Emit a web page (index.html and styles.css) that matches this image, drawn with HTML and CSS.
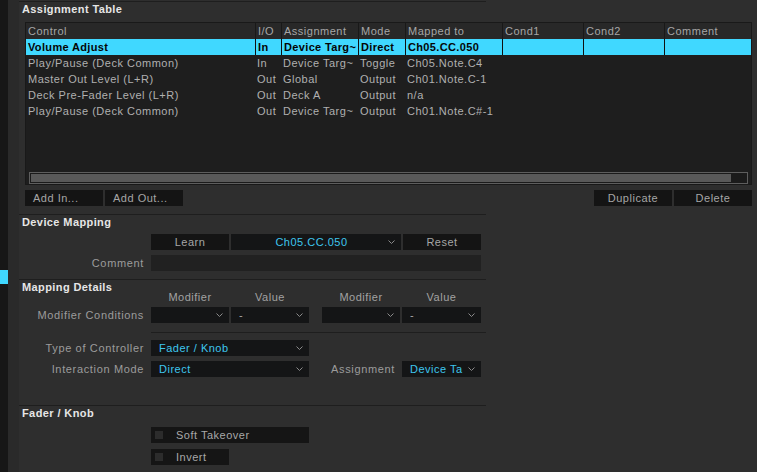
FILE: index.html
```html
<!DOCTYPE html>
<html>
<head>
<meta charset="utf-8">
<link rel="stylesheet" href="styles.css">
</head>
<body>
<div class="app">
  <div class="rail"><div class="rail-mark"></div></div>
  <div class="gutter"></div>
  <main class="main">
    <div class="rule rule-top"></div>
    <h2 class="title">Assignment Table</h2>
    <div class="table">
      <div class="tr th">
        <div class="td">Control</div><div class="td">I/O</div><div class="td">Assignment</div><div class="td">Mode</div><div class="td">Mapped to</div><div class="td">Cond1</div><div class="td">Cond2</div><div class="td">Comment</div>
      </div>
      <div class="tr sel">
        <div class="td">Volume Adjust</div><div class="td">In</div><div class="td">Device Targ~</div><div class="td">Direct</div><div class="td">Ch05.CC.050</div><div class="td"></div><div class="td"></div><div class="td"></div>
      </div>
      <div class="tr">
        <div class="td">Play/Pause (Deck Common)</div><div class="td">In</div><div class="td">Device Targ~</div><div class="td">Toggle</div><div class="td">Ch05.Note.C4</div><div class="td"></div><div class="td"></div><div class="td"></div>
      </div>
      <div class="tr">
        <div class="td">Master Out Level (L+R)</div><div class="td">Out</div><div class="td">Global</div><div class="td">Output</div><div class="td">Ch01.Note.C-1</div><div class="td"></div><div class="td"></div><div class="td"></div>
      </div>
      <div class="tr">
        <div class="td">Deck Pre-Fader Level (L+R)</div><div class="td">Out</div><div class="td">Deck A</div><div class="td">Output</div><div class="td">n/a</div><div class="td"></div><div class="td"></div><div class="td"></div>
      </div>
      <div class="tr">
        <div class="td">Play/Pause (Deck Common)</div><div class="td">Out</div><div class="td">Device Targ~</div><div class="td">Output</div><div class="td">Ch01.Note.C#-1</div><div class="td"></div><div class="td"></div><div class="td"></div>
      </div>
      <div class="tbody-fill"></div>
      <div class="hscroll"><div class="hthumb"></div></div>
    </div>
    <div class="btnrow">
      <div class="btngroup">
        <div class="btn btn-left">Add In...</div>
        <div class="btn btn-left">Add Out...</div>
      </div>
      <div class="btngroup">
        <div class="btn">Duplicate</div>
        <div class="btn">Delete</div>
      </div>
    </div>

    <div class="rule rule-sec"></div>
    <h2 class="title">Device Mapping</h2>
    <div class="row row-first">
      <div class="label"></div>
      <div class="btn">Learn</div>
      <div class="dd dd-center w170 gap2"><span class="dd-text cyan">Ch05.CC.050</span><svg class="chev" width="7" height="4" viewBox="0 0 7 4"><polyline points="0.5,0.5 3.5,3.5 6.5,0.5"/></svg></div>
      <div class="btn gap2">Reset</div>
    </div>
    <div class="row row-next">
      <div class="label">Comment</div>
      <div class="field w330"></div>
    </div>

    <div class="rule rule-sec2"></div>
    <h2 class="title">Mapping Details</h2>
    <div class="row heads">
      <div class="label"></div>
      <div class="head w78">Modifier</div>
      <div class="head w78 gap2">Value</div>
      <div class="head w78 gap13">Modifier</div>
      <div class="head w79 gap2">Value</div>
    </div>
    <div class="row row-cond">
      <div class="label">Modifier Conditions</div>
      <div class="dd w78"><span class="dd-text"></span><svg class="chev" width="7" height="4" viewBox="0 0 7 4"><polyline points="0.5,0.5 3.5,3.5 6.5,0.5"/></svg></div>
      <div class="dd w78 gap2"><span class="dd-text">-</span><svg class="chev" width="7" height="4" viewBox="0 0 7 4"><polyline points="0.5,0.5 3.5,3.5 6.5,0.5"/></svg></div>
      <div class="dd w78 gap13"><span class="dd-text"></span><svg class="chev" width="7" height="4" viewBox="0 0 7 4"><polyline points="0.5,0.5 3.5,3.5 6.5,0.5"/></svg></div>
      <div class="dd w79 gap2"><span class="dd-text">-</span><svg class="chev" width="7" height="4" viewBox="0 0 7 4"><polyline points="0.5,0.5 3.5,3.5 6.5,0.5"/></svg></div>
    </div>
    <div class="rule rule-sub"></div>
    <div class="row row-type">
      <div class="label">Type of Controller</div>
      <div class="dd w158"><span class="dd-text cyan">Fader / Knob</span><svg class="chev" width="7" height="4" viewBox="0 0 7 4"><polyline points="0.5,0.5 3.5,3.5 6.5,0.5"/></svg></div>
    </div>
    <div class="row row-next">
      <div class="label">Interaction Mode</div>
      <div class="dd w158"><span class="dd-text cyan">Direct</span><svg class="chev" width="7" height="4" viewBox="0 0 7 4"><polyline points="0.5,0.5 3.5,3.5 6.5,0.5"/></svg></div>
      <div class="label label-mid">Assignment</div>
      <div class="dd w79"><span class="dd-text cyan">Device Ta</span><svg class="chev" width="7" height="4" viewBox="0 0 7 4"><polyline points="0.5,0.5 3.5,3.5 6.5,0.5"/></svg></div>
    </div>

    <div class="rule rule-sec3"></div>
    <h2 class="title">Fader / Knob</h2>
    <div class="row row-check">
      <div class="label"></div>
      <div class="check w158"><span class="box"></span><span>Soft Takeover</span></div>
    </div>
    <div class="row row-check2">
      <div class="label"></div>
      <div class="check w78"><span class="box"></span><span>Invert</span></div>
    </div>
  </main>
</div>
</body>
</html>
```

FILE: styles.css
```css
* { box-sizing: border-box; }
html, body { margin: 0; padding: 0; }
body {
  background: #2e2e2e;
  font-family: "Liberation Sans", Arial, sans-serif;
  font-size: 11px;
  letter-spacing: 0.5px;
  color: #a8a8a8;
  width: 757px;
  height: 472px;
  overflow: hidden;
}
.app { display: flex; height: 472px; }
.rail { width: 8px; background: #171717; flex: none; }
.rail-mark { margin-top: 270px; height: 14px; background: #40d8ff; }
.gutter { width: 11px; background: #2a2a2a; flex: none; }
.main { width: 738px; display: flex; flex-direction: column; }

.rule { width: 467px; height: 1px; background: #1e1e1e; flex: none; }
.rule-top { margin-top: 1px; }
.rule-sec { margin-top: 8px; }
.rule-sec2 { margin-top: 8px; }
.rule-sec3 { margin-top: 28px; }
.rule-sub { margin-top: 9px; margin-left: 132px; width: 335px; }

.title {
  margin: 0;
  padding-left: 3px;
  font-size: 11px;
  font-weight: bold;
  line-height: 14px;
  letter-spacing: 0.4px;
  color: #e6e6e6;
}

.table {
  margin-top: 6px;
  margin-left: 6px;
  width: 727px;
  height: 163px;
  border: 1px solid #191919;
  background: #1e1e1e;
  display: flex;
  flex-direction: column;
}
.tr {
  display: grid;
  grid-template-columns: 229px 26px 77px 47px 97px 81px 81px 87px;
  height: 16px;
  line-height: 16px;
  color: #b0b0b0;
}
.td {
  padding-left: 2px;
  white-space: nowrap;
  overflow: hidden;
}
.th { background: #282828; color: #a6a6a6; }
.th .td + .td { border-left: 1px solid #191919; }
.sel { background: #40d8ff; color: #050505; font-weight: bold; letter-spacing: 0.35px; }
.sel .td + .td { border-left: 1px solid #101010; }
.tbody-fill { height: 53px; flex: none; }
.hscroll {
  margin: 0 3px;
  height: 12px;
  border: 1px solid #5e5e5e;
  padding: 1px;
  background: #1b1b1b;
}
.hthumb { width: 700px; height: 100%; background: #595959; }

.btnrow {
  margin-top: 5px;
  margin-left: 6px;
  width: 727px;
  display: flex;
  justify-content: space-between;
}
.btngroup { display: flex; gap: 2px; }
.btn {
  width: 78px;
  height: 16px;
  line-height: 16px;
  background: #141414;
  color: #a6a6a6;
  text-align: center;
  flex: none;
}
.btn-left { text-align: left; padding-left: 8px; }

.row { display: flex; align-items: center; height: 16px; }
.row-first { margin-top: 5px; }
.row-next { margin-top: 5px; }
.heads { margin-top: -4px; height: 14px; }
.row-cond { margin-top: 3px; }
.row-type { margin-top: 7px; }
.row-check { margin-top: 7px; }
.row-check2 { margin-top: 6px; }

.label {
  width: 125px;
  margin-right: 7px;
  text-align: right;
  color: #9c9c9c;
  letter-spacing: 0.65px;
  white-space: nowrap;
  flex: none;
}
.label-mid { width: 86px; }
.head { text-align: center; color: #a2a2a2; line-height: 14px; flex: none; }

.w78 { width: 78px; }
.w79 { width: 79px; }
.w158 { width: 158px; }
.w170 { width: 170px; }
.w330 { width: 330px; }
.gap2 { margin-left: 2px; }
.gap13 { margin-left: 13px; }

.dd {
  height: 16px;
  background: #141516;
  display: flex;
  align-items: center;
  padding: 0 6px 0 8px;
  flex: none;
}
.dd-text {
  flex: 1;
  white-space: nowrap;
  overflow: hidden;
  line-height: 16px;
  color: #a8a8a8;
}
.dd-center .dd-text { text-align: center; padding-right: 4px; }
.cyan { color: #3ec6ee; }
.chev { flex: none; display: block; }
.chev polyline { fill: none; stroke: #8a8a8a; stroke-width: 1; }

.field { height: 16px; background: #212121; flex: none; }

.check {
  height: 16px;
  background: #151515;
  display: flex;
  align-items: center;
  padding-left: 4px;
  color: #a8a8a8;
  flex: none;
}
.box { width: 8px; height: 8px; background: #2c2c2c; margin-right: 13px; flex: none; }
```
